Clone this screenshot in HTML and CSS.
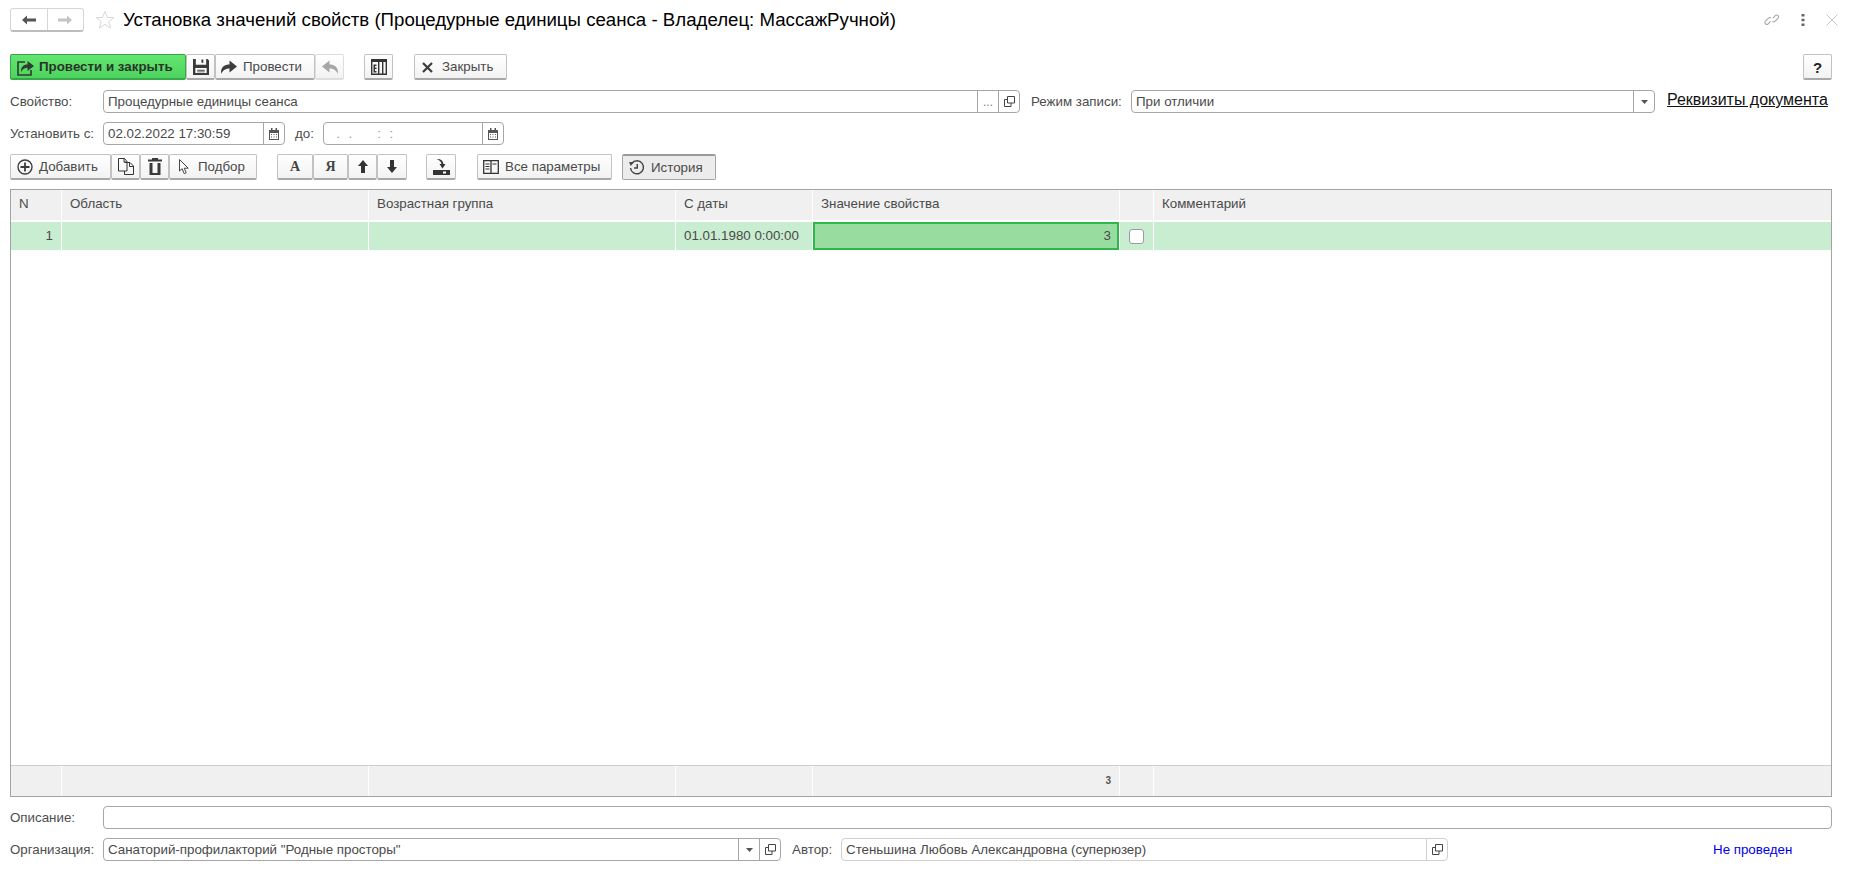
FILE: index.html
```html
<!DOCTYPE html>
<html lang="ru">
<head>
<meta charset="utf-8">
<title>Установка значений свойств</title>
<link rel="stylesheet" href="styles.css">
</head>
<body>
<div class="page">
  <header class="titlebar">
    <div class="nav">
      <span class="nav-btn"><svg width="14" height="10" viewBox="0 0 14 10"><path d="M0 5l5-4.500v3h9v3H5v3z" fill="#555"/></svg></span>
      <span class="nav-btn"><svg width="14" height="10" viewBox="0 0 14 10"><path d="M14 5L9 .5v3H0v3h9v3z" fill="#c4c4c4"/></svg></span>
    </div>
    <svg class="star" width="20" height="20" viewBox="0 0 20 20"><path d="M10 1.500l2.500 6h6.300l-5 4.100 1.800 6.400-5.600-3.700-5.600 3.700 1.800-6.400-5-4.100h6.300z" fill="none" stroke="#d8d8d8"/></svg>
    <h1 class="title">Установка значений свойств (Процедурные единицы сеанса - Владелец: МассажРучной)</h1>
    <div class="win-icons">
      <svg width="16" height="16" viewBox="0 0 16 16"><g fill="none" stroke="#a8a8a8" stroke-width="1.100"><path d="M6.500 9.500l-2.300 2.300a1.900 1.900 0 0 1-2.700-2.700l3-3a1.900 1.900 0 0 1 2.700 0"/><path d="M9.500 6.500l2.300-2.300a1.900 1.900 0 0 1 2.700 2.700l-3 3a1.900 1.900 0 0 1-2.700 0" transform="translate(-.500 -.500)"/></g></svg>
      <svg width="4" height="14" viewBox="0 0 4 14"><path d="M.5 1h3v2.500h-3zM.5 5.700h3v2.500h-3zM.5 10.500h3V13h-3z" fill="#666"/></svg>
      <svg width="12" height="12" viewBox="0 0 12 12"><path d="M.5.5l11 11M11.500.5l-11 11" stroke="#c4c4c4" fill="none"/></svg>
    </div>
  </header>

  <div class="row cmdbar">
    <div class="group">
      <button class="btn primary w176"><svg width="17" height="17" viewBox="0 0 17 17"><path d="M8 3H1v13h13v-5" fill="none" stroke="#2f3b30" stroke-width="1.600"/><path d="M4 13c-.3-5 2.500-7.500 6.500-7.500V2L17 7l-6.500 5V8.800C8 8.800 5.500 10 4 13z" fill="#2f3b30"/></svg>Провести и закрыть</button>
      <button class="btn icon w29"><svg width="16" height="16" viewBox="0 0 17 17"><path d="M0 0h3v6h11V0h1.500L17 1.500V17H0z" fill="#3a3a3a"/><path d="M5 0h7v4.500H5zM2.500 9.500h12V15h-12z" fill="#fff"/><path d="M9 .5h2v3.500H9zM4.500 11.500h8v1h-8zM4.500 13.300h8v.8h-8z" fill="#3a3a3a"/></svg></button>
      <button class="btn w100 pl6"><svg width="16" height="14" viewBox="0 0 16 14"><path d="M0 14c-.5-6.500 3-9.500 8.500-9.500V.5L16 6.500 8.500 12.500V8.500C5 8.500 2 10 0 14z" fill="#3c3c3c"/></svg>Провести</button>
      <button class="btn icon w29 faded"><svg width="16" height="14" viewBox="0 0 16 14"><path d="M16 14c.5-6.500-3-9.500-8.500-9.500V.5L0 6.500l7.500 6V8.500C11 8.500 14 10 16 14z" fill="#a6a6a6"/></svg></button>
    </div>
    <button class="btn icon w29 gap20"><svg width="16" height="16" viewBox="0 0 16 16"><path d="M.7.7h14.600v14.600H.7z" fill="none" stroke="#333" stroke-width="1.400"/><path d="M0 0h16v3H0zM7 3h1.400v13H7zM11 3h1.400v13H11zM2.500 5.500h3v1.500h-1.500v1.500h1.500v1.500h-1.500v2h1.500v1.500h-3z" fill="#333"/></svg></button>
    <button class="btn w93 gap21 pl9"><svg width="11" height="11" viewBox="0 0 11 11"><path d="M1 1l9 9M10 1l-9 9" stroke="#3c3c3c" stroke-width="2.200" fill="none"/></svg>Закрыть</button>
    <button class="btn icon help">?</button>
  </div>

  <div class="row formrow first">
    <label class="lbl w93">Свойство:</label>
    <div class="field w917"><span class="val">Процедурные единицы сеанса</span><span class="fbtn dots">...</span><span class="fbtn"><svg width="11" height="11" viewBox="0 0 11 11"><path d="M3.500.5h7v6.500h-7zM3.500 3.500H.5v7h6.500V7" fill="none" stroke="#444"/></svg></span></div>
    <label class="lbl mode-lbl">Режим записи:</label>
    <div class="field w524"><span class="val">При отличии</span><span class="fbtn"><svg width="7" height="4" viewBox="0 0 7 4"><path d="M0 0h7L3.500 4z" fill="#555"/></svg></span></div>
    <a class="doc-link" href="#">Реквизиты документа</a>
  </div>

  <div class="row formrow">
    <label class="lbl w93">Установить с:</label>
    <div class="field w182"><span class="val">02.02.2022 17:30:59</span><span class="fbtn"><svg width="12" height="12" viewBox="0 0 12 12"><path d="M1 2h10v10H1z" fill="#555"/><path d="M2 5h8v6H2z" fill="#fff"/><path d="M3 0h1.500v3H3zM7.500 0H9v3H7.500zM3 6h1v1H3zM5.500 6h1v1h-1zM8 6h1v1H8zM3 8.500h1v1H3zM5.500 8.500h1v1h-1zM8 8.500h1v1H8z" fill="#555"/></svg></span></div>
    <label class="lbl until">до:</label>
    <div class="field w181"><span class="val mask">&nbsp;&nbsp;.&nbsp;&nbsp;.&nbsp;&nbsp;&nbsp;&nbsp;&nbsp;&nbsp;:&nbsp;&nbsp;:</span><span class="fbtn"><svg width="12" height="12" viewBox="0 0 12 12"><path d="M1 2h10v10H1z" fill="#555"/><path d="M2 5h8v6H2z" fill="#fff"/><path d="M3 0h1.500v3H3zM7.500 0H9v3H7.500zM3 6h1v1H3zM5.500 6h1v1h-1zM8 6h1v1H8zM3 8.500h1v1H3zM5.500 8.500h1v1h-1zM8 8.500h1v1H8z" fill="#555"/></svg></span></div>
  </div>

  <div class="row toolbar">
    <div class="group">
      <button class="btn w101 pl7"><svg width="16" height="16" viewBox="0 0 16 16"><circle cx="8" cy="8" r="7" fill="none" stroke="#3c3c3c" stroke-width="1.400"/><path d="M7.100 3.500h1.800v3.600h3.600v1.800H8.900v3.600H7.100V8.900H3.500V7.100h3.600z" fill="#3c3c3c"/></svg>Добавить</button>
      <button class="btn icon w29"><svg width="16" height="17" viewBox="0 0 16 17"><path d="M.5.500h6l2.500 3v9.500H.5zM6.500 4.500H12l3.500 3.500v8.500H6.500V13M6 .5v3.500h3M11.500 4.500v4h4" fill="none" stroke="#333"/></svg></button>
      <button class="btn icon w29"><svg width="14" height="17" viewBox="0 0 14 17"><path d="M4 0h6v1.500h4V3.500H0V1.500h4zM1.500 5H4.500v10h5V5h3v12h-11z" fill="#3a3a3a"/></svg></button>
      <button class="btn w88 pl10"><svg width="10" height="16" viewBox="0 0 10 16"><path d="M.5.500v11.500l2.700-2.300 2 5 2-1-2-4.500h4z" fill="#fff" stroke="#444"/></svg>Подбор</button>
    </div>
    <div class="group gap20">
      <button class="btn icon w36 serif">А</button>
      <button class="btn icon w35 serif">Я</button>
      <button class="btn icon w29"><svg width="10" height="13" viewBox="0 0 10 13"><path d="M5 0l5 6H7v7H3V6H0z" fill="#333"/></svg></button>
      <button class="btn icon w30"><svg width="10" height="13" viewBox="0 0 10 13"><path d="M5 13l5-6H7V0H3v7H0z" fill="#333"/></svg></button>
    </div>
    <button class="btn icon w30 gap19"><svg width="17" height="17" viewBox="0 0 17 17"><path d="M0 12h17v5H0z" fill="#333"/><path d="M10 13.500h3v2h-3z" fill="#fff"/><path d="M3.500 1c3.500-.5 6.500 1 7 5h2l-3 4.500L6.500 6h2c-.3-2.500-2.300-4-5-5z" fill="#333"/></svg></button>
    <button class="btn w135 gap21 pl6"><svg width="16" height="14" viewBox="0 0 16 14"><path d="M.7.700h14.600v12.600H.7zM8 .7v12.600" fill="none" stroke="#333" stroke-width="1.300"/><path d="M2.500 3.500h4v1h-4zM2.500 6h4v1h-4zM2.500 8.500h4v1h-4zM9.500 3.500h4v1h-4z" fill="#333"/></svg>Все параметры</button>
    <button class="btn w94 pressed gap10 pl7"><svg width="16" height="16" viewBox="0 0 16 16"><path d="M2.800 3.300A6.500 6.500 0 1 1 1.500 8" fill="none" stroke="#444" stroke-width="1.400"/><path d="M0 2l5 .3-3.300 3.700zM7.500 4H9v4.800H5V7.300h2.500z" fill="#444"/></svg>История</button>
  </div>

  <section class="table">
    <div class="tr head">
      <div class="th">N</div>
      <div class="th">Область</div>
      <div class="th">Возрастная группа</div>
      <div class="th">С даты</div>
      <div class="th">Значение свойства</div>
      <div class="th"></div>
      <div class="th">Комментарий</div>
    </div>
    <div class="tr body-row">
      <div class="td right">1</div>
      <div class="td"></div>
      <div class="td"></div>
      <div class="td">01.01.1980 0:00:00</div>
      <div class="td right active">3</div>
      <div class="td center"><span class="check"></span></div>
      <div class="td"></div>
    </div>
    <div class="spacer"></div>
    <div class="tr foot">
      <div class="tf"></div>
      <div class="tf"></div>
      <div class="tf"></div>
      <div class="tf"></div>
      <div class="tf right total">3</div>
      <div class="tf"></div>
      <div class="tf"></div>
    </div>
  </section>

  <div class="row formrow">
    <label class="lbl w93">Описание:</label>
    <div class="field grow"><span class="val"></span></div>
  </div>

  <div class="row formrow">
    <label class="lbl w93">Организация:</label>
    <div class="field w678"><span class="val">Санаторий-профилакторий "Родные просторы"</span><span class="fbtn"><svg width="7" height="4" viewBox="0 0 7 4"><path d="M0 0h7L3.500 4z" fill="#555"/></svg></span><span class="fbtn"><svg width="11" height="11" viewBox="0 0 11 11"><path d="M3.500.5h7v6.500h-7zM3.500 3.500H.5v7h6.500V7" fill="none" stroke="#444"/></svg></span></div>
    <label class="lbl author">Автор:</label>
    <div class="field w607 light"><span class="val">Стеньшина Любовь Александровна (суперюзер)</span><span class="fbtn"><svg width="11" height="11" viewBox="0 0 11 11"><path d="M3.500.5h7v6.500h-7zM3.500 3.500H.5v7h6.500V7" fill="none" stroke="#444"/></svg></span></div>
    <span class="status">Не проведен</span>
  </div>
</div>
</body>
</html>
```
FILE: styles.css
```css
* { box-sizing: border-box; }
html, body { margin: 0; padding: 0; background: #fff; }
body { font: 13.33px/1 "Liberation Sans", Arial, sans-serif; color: #4a4a4a; }
.page { width: 1853px; height: 870px; padding: 8px 21px 0 10px; display: flex; flex-direction: column; overflow: hidden; }

.titlebar { display: flex; align-items: center; height: 24px; margin-bottom: 22px; }
.nav { display: flex; width: 74px; height: 24px; border: 1px solid #d6d6d6; border-bottom: 2px solid #bdbdbd; border-radius: 3px; }
.nav-btn { flex: 1; display: flex; align-items: center; justify-content: center; }
.nav-btn + .nav-btn { border-left: 1px solid #d6d6d6; }
.star { margin-left: 11px; }
.title { margin: 0 0 0 8px; font-size: 18.66px; font-weight: 400; color: #000; white-space: nowrap; }
.win-icons { margin-left: auto; margin-right: -6px; display: flex; align-items: center; gap: 21px; }

.row { display: flex; align-items: center; }
.cmdbar { height: 26px; }
.cmdbar .btn { padding-top: 1px; }
.group { display: flex; }

.btn { display: flex; align-items: center; justify-content: center; gap: 6px; height: 26px; padding: 0; font: inherit; color: #4a4a4a; background: linear-gradient(#fff, #f2f2f2); border: 1px solid #c2c2c2; border-bottom: 2px solid #a8a8a8; border-radius: 2px; white-space: nowrap; }
.primary { background: linear-gradient(#63e66f, #4dd45e); border-color: #35a847; color: #2a332b; font-weight: 700; justify-content: flex-start; padding-left: 6px; gap: 5px; }
.pl6, .pl7, .pl9, .pl10 { justify-content: flex-start; }
.pl6 { padding-left: 5px; }
.pl7 { padding-left: 6px; }
.pl9 { padding-left: 7px; gap: 9px; }
.pl10 { padding-left: 9px; gap: 9px; }
.faded { border-color: #dedede; }
.pressed { background: #ececec; border-color: #a4a4a4; border-top: 2px solid #9a9a9a; border-bottom: 1px solid #a4a4a4; }
.serif { font: 700 14px "Liberation Serif", serif; color: #444; }
.w29 { width: 29px; } .w30 { width: 30px; } .w35 { width: 35px; } .w36 { width: 36px; }
.w88 { width: 88px; } .w93 { width: 93px; } .w94 { width: 94px; } .w100 { width: 100px; } .w101 { width: 101px; } .w135 { width: 135px; } .w176 { width: 176px; }
.gap21 { margin-left: 21px; } .gap20 { margin-left: 20px; } .gap19 { margin-left: 19px; } .gap10 { margin-left: 10px; }
.help { width: 29px; margin-left: auto; font-size: 15px; font-weight: 700; color: #222; }

.formrow { height: 23px; margin-top: 9px; }
.formrow.first { margin-top: 10px; }
.toolbar { height: 26px; margin-top: 9px; }
.lbl { flex: none; white-space: nowrap; color: #4d4d4d; }
label.w93 { width: 93px; }
.mode-lbl { margin-left: 11px; width: 100px; }
.until { margin-left: 10px; width: 28px; }
.author { margin-left: 11px; width: 49px; }

.field { display: flex; align-items: stretch; height: 23px; flex: none; background: #fff; border: 1px solid #a6a6a6; border-radius: 4px; }
.field.light { border-color: #cfcfcf; }
.field.grow { flex: 1; }
.val { flex: 1; padding: 0 4px; line-height: 21px; white-space: nowrap; overflow: hidden; color: #4a4a4a; }
.mask { color: #9a9a9a; letter-spacing: .4px; }
.fbtn { flex: none; width: 21px; display: flex; align-items: center; justify-content: center; border-left: 1px solid #a6a6a6; }
.light .fbtn { border-left-color: #cfcfcf; }
.dots { color: #777; font-size: 12px; }
.w917 { width: 917px; } .w524 { width: 524px; } .w182 { width: 182px; } .w181 { width: 181px; } .w678 { width: 678px; } .w607 { width: 607px; }
.doc-link { margin-left: 12px; margin-top: -3px; font-size: 16px; color: #111; white-space: nowrap; text-decoration: underline; }
.status { margin-left: 265px; color: #0000e6; }

.table { flex: none; height: 608px; margin-top: 9px; border: 1px solid #a3a3a3; display: flex; flex-direction: column; }
.tr { display: grid; grid-template-columns: 50px 306px 306px 136px 306px 33px 1fr; column-gap: 1px; }
.head { height: 31px; background: #fff; border-bottom: 1px solid #fff; }
.th { background: #f0f0f0; padding-left: 8px; line-height: 28px; color: #4a4a4a; }
.body-row { height: 28px; margin-top: 1px; }
.td { background: #c9edd0; padding: 0 8px; line-height: 27px; }
.right { text-align: right; }
.center { display: flex; align-items: center; justify-content: center; padding: 0; }
.active { background: #98dd9f; border: 2px solid #2db84a; padding: 0 6px; line-height: 23px; }
.check { width: 15px; height: 15px; background: #fff; border: 1px solid #9c9c9c; border-radius: 3px; }
.spacer { flex: 1; border-bottom: 1px solid #cfcfcf; }
.foot { height: 30px; }
.tf { background: #f0f0f0; padding: 0 8px; line-height: 30px; }
.total { font-size: 10px; font-weight: 700; color: #555; }
```
